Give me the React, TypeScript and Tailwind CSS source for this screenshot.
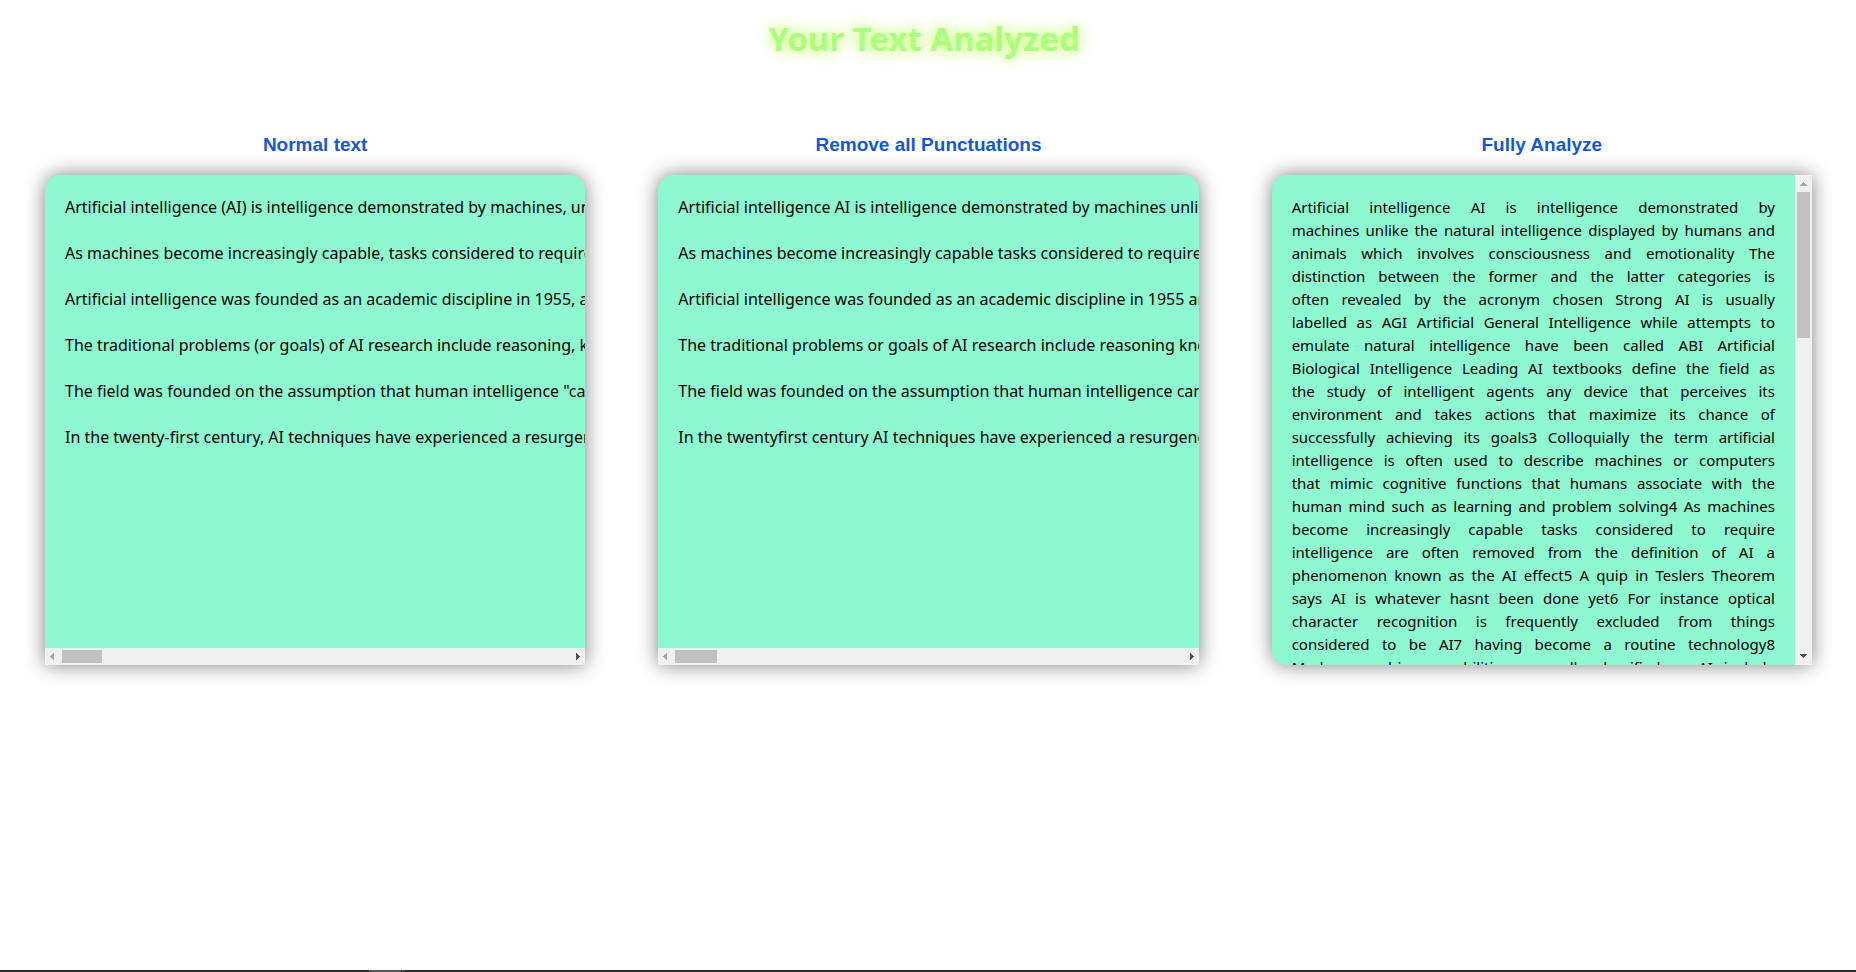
import { useRef, useState } from "react";
import type { ReactNode } from "react";

const NORMAL = [
  "Artificial intelligence (AI) is intelligence demonstrated by machines, unlike the natural intelligence displayed by humans and animals.",
  "As machines become increasingly capable, tasks considered to require \"intelligence\" are often removed from the definition of AI.",
  "Artificial intelligence was founded as an academic discipline in 1955, and in the years since has experienced several waves of optimism.",
  "The traditional problems (or goals) of AI research include reasoning, knowledge representation, planning, learning and perception.",
  "The field was founded on the assumption that human intelligence \"can be so precisely described that a machine can be made to simulate it\".",
  "In the twenty-first century, AI techniques have experienced a resurgence following concurrent advances in computer power.",
];

const stripPunctuation = (text: string) => text.replace(/[^\w\s]/g, "");

const ANALYZED = [
  "Artificial intelligence AI is intelligence demonstrated by",
  "machines unlike the natural intelligence displayed by humans and",
  "animals which involves consciousness and emotionality The",
  "distinction between the former and the latter categories is",
  "often revealed by the acronym chosen Strong AI is usually",
  "labelled as AGI Artificial General Intelligence while attempts to",
  "emulate natural intelligence have been called ABI Artificial",
  "Biological Intelligence Leading AI textbooks define the field as",
  "the study of intelligent agents any device that perceives its",
  "environment and takes actions that maximize its chance of",
  "successfully achieving its goals3 Colloquially the term artificial",
  "intelligence is often used to describe machines or computers",
  "that mimic cognitive functions that humans associate with the",
  "human mind such as learning and problem solving4 As machines",
  "become increasingly capable tasks considered to require",
  "intelligence are often removed from the definition of AI a",
  "phenomenon known as the AI effect5 A quip in Teslers Theorem",
  "says AI is whatever hasnt been done yet6 For instance optical",
  "character recognition is frequently excluded from things",
  "considered to be AI7 having become a routine technology8",
  "Modern machine capabilities generally classified as AI include",
];

type Axis = "x" | "y";

function Arrow({ path, dim }: { path: string; dim: boolean }) {
  return (
    <svg viewBox="0 0 17 17" className={dim ? "size-[17px] fill-[#a3a3a3]" : "size-[17px] fill-[#505050]"} shapeRendering="crispEdges" aria-hidden="true">
      <path d={path} />
    </svg>
  );
}

function Panel({ title, axis, thumbClass, children }: { title: string; axis: Axis; thumbClass: string; children: ReactNode }) {
  const view = useRef<HTMLDivElement>(null);
  const [progress, setProgress] = useState(0);
  const horizontal = axis === "x";

  const onScroll = () => {
    const el = view.current;
    if (!el) return;
    const range = horizontal ? el.scrollWidth - el.clientWidth : el.scrollHeight - el.clientHeight;
    const offset = horizontal ? el.scrollLeft : el.scrollTop;
    setProgress(range > 0 ? offset / range : 0);
  };
  const step = (amount: number) => view.current?.scrollBy(horizontal ? { left: amount } : { top: amount });

  return (
    <section className="flex min-w-0 flex-col">
      <h2 className="mb-5 text-center font-['Liberation_Sans',Arial,sans-serif] text-[19px] leading-[21px] font-bold text-[#1558d6]">{title}</h2>
      <div
        className={
          horizontal
            ? "flex h-[490px] flex-col overflow-hidden rounded-t-[15px] bg-[#8ef8d0] shadow-[0_0_20px_gray]"
            : "flex h-[490px] overflow-hidden rounded-l-[15px] bg-[#8ef8d0] shadow-[0_0_20px_gray]"
        }
      >
        <div
          ref={view}
          onScroll={onScroll}
          tabIndex={0}
          aria-label={title}
          className="min-h-0 min-w-0 flex-1 overflow-auto px-5 pt-[21px] pb-5 text-base leading-[23px] text-black [scrollbar-width:none]"
        >
          {children}
        </div>
        <div className={horizontal ? "flex h-[17px] shrink-0 bg-[#f0f0f0]" : "flex w-[17px] shrink-0 flex-col bg-[#f0f0f0]"}>
          <button type="button" aria-label={horizontal ? "Scroll left" : "Scroll up"} onClick={() => step(-40)}>
            <Arrow dim={progress === 0} path={horizontal ? "M9 5v7H8v-1H7v-1H6V9H5V8h1V7h1V6h1V5z" : "M5 11v-1h1V9h1V8h1V7h1v1h1v1h1v1h1v1z"} />
          </button>
          <div className={horizontal ? "flex min-w-0 flex-1 items-center" : "flex min-h-0 flex-1 flex-col items-center"}>
            <div style={{ flexGrow: progress }} />
            <div className={thumbClass} />
            <div style={{ flexGrow: 1 - progress }} />
          </div>
          <button type="button" aria-label={horizontal ? "Scroll right" : "Scroll down"} onClick={() => step(40)}>
            <Arrow dim={progress === 1} path={horizontal ? "M8 5v7h1v-1h1v-1h1V9h1V8h-1V7h-1V6H9V5z" : "M5 6v1h1v1h1v1h1v1h1V9h1V8h1V7h1V6z"} />
          </button>
        </div>
      </div>
    </section>
  );
}

export default function App() {
  return (
    <div className="flex min-h-screen flex-col bg-white font-['Comic_Sans_MS','Noto_Sans',cursive]">
      <h1 className="pt-4 pr-2 text-center text-[33px] leading-[45px] font-bold text-[#acff7e] [text-shadow:0_0_15px_greenyellow]">Your Text Analyzed</h1>
      <main className="grid flex-1 grid-cols-3 content-start gap-x-[73px] pt-[73px] pr-11 pl-[45px]">
        <Panel title="Normal text" axis="x" thumbClass="h-[13px] w-10 shrink-0 bg-[#c1c1c1]">
          {NORMAL.map((line) => (
            <p key={line} className="mb-[23px] whitespace-nowrap">{line}</p>
          ))}
        </Panel>
        <Panel title="Remove all Punctuations" axis="x" thumbClass="h-[13px] w-[42px] shrink-0 bg-[#c1c1c1]">
          {NORMAL.map((line) => (
            <p key={line} className="mb-[23px] whitespace-nowrap">{stripPunctuation(line)}</p>
          ))}
        </Panel>
        <Panel title="Fully Analyze" axis="y" thumbClass="h-[146px] w-[13px] shrink-0 bg-[#c1c1c1]">
          <div className="text-[15px] leading-[23px]">
            {ANALYZED.map((line) => (
              <p key={line} className="[text-align-last:justify]">{line}</p>
            ))}
          </div>
        </Panel>
      </main>
      <footer className="flex h-0.5 bg-[#2d2d30]">
        <div className="ml-[369px] w-8 bg-[#58585a]" />
        <div className="ml-px w-[3px] bg-[#48484b]" />
      </footer>
    </div>
  );
}
